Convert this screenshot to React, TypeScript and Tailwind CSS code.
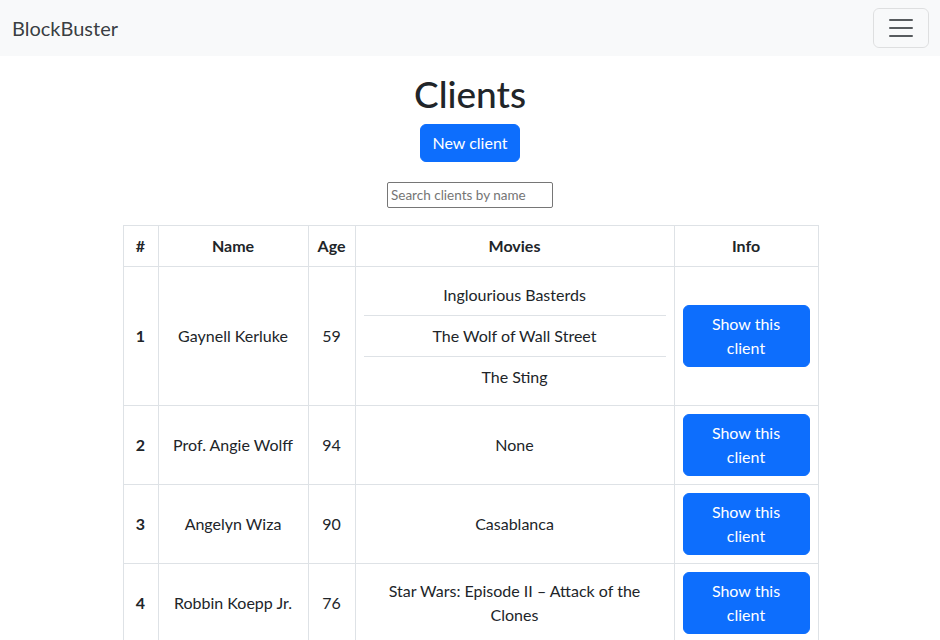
import React, { useState } from 'react'

type Client = {
  id: number
  name: string
  age: number
  movies: string[]
}

const clients: Client[] = [
  { id: 1, name: 'Gaynell Kerluke', age: 59, movies: ['Inglourious Basterds', 'The Wolf of Wall Street', 'The Sting'] },
  { id: 2, name: 'Prof. Angie Wolff', age: 94, movies: [] },
  { id: 3, name: 'Angelyn Wiza', age: 90, movies: ['Casablanca'] },
  { id: 4, name: 'Robbin Koepp Jr.', age: 76, movies: ['Star Wars: Episode II – Attack of the Clones'] },
]

function Toggler() {
  return (
    <button className="w-[56px] h-[40px] flex items-center justify-center border border-black/10 rounded-md">
      <svg width="30" height="30" viewBox="0 0 30 30">
        <path d="M4 7h22M4 15h22M4 23h22" stroke="rgba(33,37,41,0.75)" strokeWidth="2" strokeLinecap="round" fill="none" />
      </svg>
    </button>
  )
}

export default function App() {
  const [query, setQuery] = useState('')

  const shown = clients.filter((c) => c.name.toLowerCase().includes(query.toLowerCase()))

  return (
    <div className="min-h-screen bg-white text-[#212529] font-['Lato',sans-serif] text-base leading-6">
      <nav className="bg-[#f8f9fa] h-[56px] flex items-center justify-between pl-3 pr-[11px]">
        <a href="#" className="text-xl leading-[30px] text-[#212529]/90">BlockBuster</a>
        <Toggler />
      </nav>

      <div className="flex flex-col items-center pt-[16px]">
        <h1 className="text-[37px] font-medium leading-[43px] mb-[9px]">Clients</h1>
        <button className="bg-[#0d6efd] text-white rounded-md px-3 py-[6px] leading-6 border border-[#0d6efd]">
          New client
        </button>

        <input
          value={query}
          onChange={(e) => setQuery(e.target.value)}
          placeholder="Search clients by name"
          className="mt-[20px] w-[166px] h-[26px] border border-[#767676] rounded-[2px] px-[3px] text-[13.5px] placeholder:text-[#757575]"
        />

        <table className="mt-[17px] ml-[1px] w-[695px] table-fixed border-collapse border border-[#dee2e6] text-center">
          <thead>
            <tr>
              <th className="w-[35px] border border-[#dee2e6] p-2 font-bold">#</th>
              <th className="w-[150px] border border-[#dee2e6] p-2 font-bold">Name</th>
              <th className="w-[47px] border border-[#dee2e6] p-2 font-bold">Age</th>
              <th className="w-[319px] border border-[#dee2e6] p-2 font-bold">Movies</th>
              <th className="w-[144px] border border-[#dee2e6] p-2 font-bold">Info</th>
            </tr>
          </thead>
          <tbody>
            {shown.map((c) => (
              <tr key={c.id}>
                <th className="border border-[#dee2e6] p-2 font-bold align-middle">{c.id}</th>
                <td className="border border-[#dee2e6] p-2 align-middle">{c.name}</td>
                <td className="border border-[#dee2e6] p-2 align-middle">{c.age}</td>
                <td className="border border-[#dee2e6] p-2 align-middle">
                  {c.movies.length === 0 ? (
                    'None'
                  ) : c.movies.length === 1 ? (
                    c.movies[0]
                  ) : (
                    <ul className="flex flex-col">
                      {c.movies.map((m, i) => (
                        <li
                          key={m}
                          className={i < c.movies.length - 1 ? 'py-2 border-b border-[#dee2e6]' : 'py-2'}
                        >
                          {m}
                        </li>
                      ))}
                    </ul>
                  )}
                </td>
                <td className="border border-[#dee2e6] p-2 align-middle">
                  <button className="w-full bg-[#0d6efd] text-white rounded-md px-3 py-[6px] leading-6 border border-[#0d6efd]">
                    Show this client
                  </button>
                </td>
              </tr>
            ))}
          </tbody>
        </table>
      </div>
    </div>
  )
}
